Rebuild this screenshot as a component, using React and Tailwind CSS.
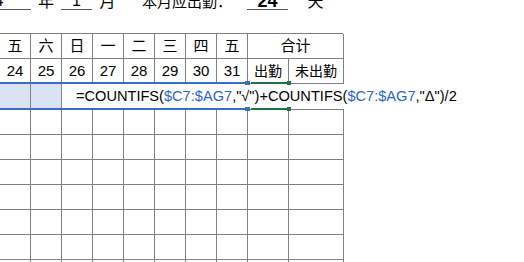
import React from "react";

const FONT = "font-['Liberation_Sans','Noto_Sans_CJK_SC',sans-serif]";
const CELL = "border-r border-b border-[#808080] flex items-center justify-center";

export default function App() {
  const days = ["五", "六", "日", "一", "二", "三", "四", "五"];
  const nums = ["24", "25", "26", "27", "28", "29", "30", "31"];
  const emptyRows = [0, 1, 2, 3, 4, 5, 6];
  return (
    <div className={`w-[524px] h-[262px] overflow-hidden bg-white text-black ${FONT}`}>
      {/* top title row, mostly cut off */}
      <div className="flex items-end h-[10px] text-[16px] leading-[16px]">
        <span className="-ml-[60px] w-[91px] border-b border-[#595959] text-center">2024</span>
        <span className="w-[30px] text-center">年</span>
        <span className="w-[31px] border-b border-[#595959] text-center">1</span>
        <span className="w-[31px] text-center">月</span>
        <span className="w-[124px] pl-[19px] text-[15px]">本月应出勤：</span>
        <span className="w-[41px] border-b border-[#595959] text-center font-bold text-[18px]">24</span>
        <span className="w-[55px] text-center">天</span>
      </div>

      <div className="relative mt-[23px] w-[343px]">
        <div className="grid grid-cols-[31px_31px_31px_31px_31px_31px_31px_31px_41px_55px] border-t border-[#808080] text-[15px]">
          {days.map((d, i) => (
            <div key={"d" + i} className={`${CELL} h-[25px]`}>{d}</div>
          ))}
          <div className={`${CELL} h-[25px] col-span-2`}>合计</div>

          {nums.map((n, i) => (
            <div key={"n" + i} className={`${CELL} h-[25px]`}>{n}</div>
          ))}
          <div className={`${CELL} h-[25px] text-[14px]`}>出勤</div>
          <div className={`${CELL} h-[25px] text-[14px]`}>未出勤</div>

          <div className="h-[26px] border-r border-b border-[#808080] bg-[#d9e2f3]" />
          <div className="h-[26px] border-r border-b border-[#808080] bg-[#d9e2f3]" />
          <div className="col-span-8 h-[26px] border-b border-[#808080] flex items-center pl-[14px] whitespace-nowrap overflow-visible text-[14.6px]">
            <span>=COUNTIFS(</span>
            <span className="text-[#3163c4]">$C7:$AG7</span>
            <span>,"√")</span>
            <span className="inline-block w-px h-[23px] bg-black" />
            <span>+COUNTIFS(</span>
            <span className="text-[#3163c4]">$C7:$AG7</span>
            <span>,"Δ")/2</span>
          </div>

          {emptyRows.map((r) =>
            Array.from({ length: 10 }).map((_, c) => (
              <div key={r + "-" + c} className="h-[25px] border-r border-b border-[#808080]" />
            ))
          )}
        </div>

        {/* range highlight (blue) */}
        <div className="absolute left-0 top-[49px] w-[247px] h-[2px] bg-[#3b6fc6]" />
        <div className="absolute left-0 top-[75px] w-[247px] h-[2px] bg-[#3b6fc6]" />
        <div className="absolute left-[245px] top-[48px] w-[5px] h-[4px] bg-[#3b6fc6]" />
        <div className="absolute left-[245px] top-[74px] w-[5px] h-[4px] bg-[#3b6fc6]" />

        {/* active cell (green) */}
        <div className="absolute left-[251px] top-[49px] w-[37px] h-[2px] bg-[#217346]" />
        <div className="absolute left-[251px] top-[75px] w-[37px] h-[2px] bg-[#217346]" />
        <div className="absolute left-[287px] top-[48px] w-[4px] h-[4px] bg-[#217346]" />
        <div className="absolute left-[287px] top-[74px] w-[4px] h-[4px] bg-[#217346]" />
      </div>
    </div>
  );
}
